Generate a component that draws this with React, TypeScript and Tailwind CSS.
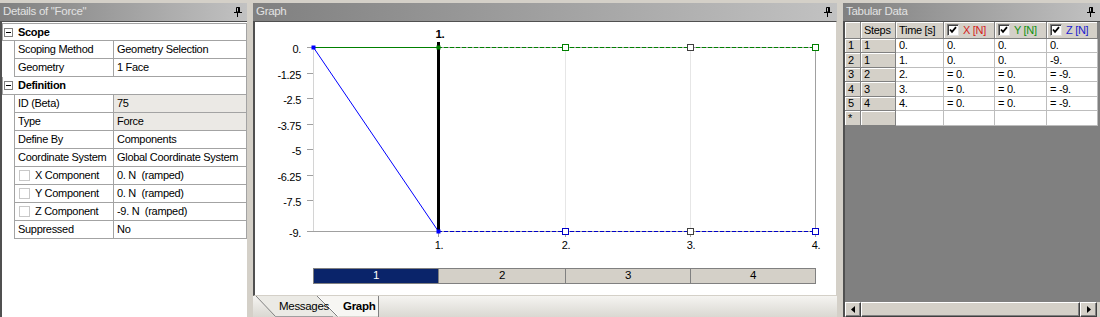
import React from "react";

function Pin() {
  return (
    <svg width="8" height="10" viewBox="0 0 8 10" className="shrink-0">
      <path d="M2.5 0.5h3v4.5h-3z" fill="none" stroke="#000" />
      <path d="M5 0.5v4.5" stroke="#000" strokeWidth="2" />
      <path d="M0 5.5h8" stroke="#000" />
      <path d="M3.5 5.5v4.5" stroke="#000" />
    </svg>
  );
}

function PanelHeader({ title }: { title: string }) {
  return (
    <div className="h-[18px] shrink-0 flex items-center justify-between pl-[3px] pr-[5px] bg-linear-to-r from-[#808080] to-[#c2c2c2] text-[11.5px] text-[#e2e2e2]">
      <span>{title}</span>
      <Pin />
    </div>
  );
}

type Row =
  | { kind: "cat"; label: string }
  | { kind: "prop"; name: string; value: string; gray?: boolean; check?: boolean };

const leftRows: Row[] = [
  { kind: "cat", label: "Scope" },
  { kind: "prop", name: "Scoping Method", value: "Geometry Selection" },
  { kind: "prop", name: "Geometry", value: "1 Face" },
  { kind: "cat", label: "Definition" },
  { kind: "prop", name: "ID (Beta)", value: "75", gray: true },
  { kind: "prop", name: "Type", value: "Force", gray: true },
  { kind: "prop", name: "Define By", value: "Components" },
  { kind: "prop", name: "Coordinate System", value: "Global Coordinate System" },
  { kind: "prop", name: "X Component", value: "0. N  (ramped)", check: true },
  { kind: "prop", name: "Y Component", value: "0. N  (ramped)", check: true },
  { kind: "prop", name: "Z Component", value: "-9. N  (ramped)", check: true },
  { kind: "prop", name: "Suppressed", value: "No" },
];

function DetailsPanel() {
  return (
    <div className="w-[247px] shrink-0 flex flex-col">
      <PanelHeader title={'Details of "Force"'} />
      <div className="flex-1 bg-white border-l-2 border-t border-[#505050] pt-px">
        <div className="w-[245px]">
          {leftRows.map((r, i) =>
            r.kind === "cat" ? (
              <div
                key={i}
                className={`h-[18px] flex items-center border-l border-r border-b border-[#a3a3a3] ${i === 0 ? "border-t" : ""}`}
              >
                <div className="w-[9px] h-[9px] ml-[1px] border border-[#808080] flex items-center justify-center">
                  <div className="w-[5px] h-px bg-black" />
                </div>
                <span className="ml-[5px] font-bold">{r.label}</span>
              </div>
            ) : (
              <div key={i} className="h-[18px] flex">
                <div className="w-[12px] shrink-0" />
                <div className="w-[99px] shrink-0 border-l border-b border-[#a3a3a3] flex items-center pl-[3px] whitespace-nowrap">
                  {r.check && (
                    <div className="w-[11px] h-[11px] border border-[#c8c8c8] mr-[5px] ml-px shrink-0" />
                  )}
                  <span>{r.name}</span>
                </div>
                <div
                  className={`flex-1 border-l border-b border-r border-[#a3a3a3] flex items-center pl-[3px] whitespace-pre ${r.gray ? "bg-[#ebe9e5]" : ""}`}
                >
                  {r.value}
                </div>
              </div>
            )
          )}
        </div>
      </div>
    </div>
  );
}

function Chart() {
  const X = [58, 183, 310, 435, 560];
  const yOf = (v: number) => Math.round(25 + (v * 184) / 9);
  const Y0 = 25;
  const Y9 = 209;
  const yVals = [0, 1.25, 2.5, 3.75, 5, 6.25, 7.5, 9];
  const yLabels = ["0.", "-1.25", "-2.5", "-3.75", "-5", "-6.25", "-7.5", "-9."];
  return (
    <svg width={581} height={246} className="block shrink-0">
      {/* axes & grid */}
      <line x1={X[0] + 0.5} y1={Y0} x2={X[0] + 0.5} y2={Y9} stroke="#d4d4d4" />
      <line x1={X[2] + 0.5} y1={Y0} x2={X[2] + 0.5} y2={Y9} stroke="#e6e6e6" />
      <line x1={X[3] + 0.5} y1={Y0} x2={X[3] + 0.5} y2={Y9} stroke="#e6e6e6" />
      <line x1={X[4] + 0.5} y1={Y0} x2={X[4] + 0.5} y2={Y9 + 6} stroke="#a0a0a0" />
      {yVals.map((v, i) => (
        <line key={"t" + i} x1={52} y1={yOf(v) + 0.5} x2={X[0]} y2={yOf(v) + 0.5} stroke="#a0a0a0" />
      ))}
      {[1, 2, 3].map((i) => (
        <line key={"b" + i} x1={X[i] + 0.5} y1={Y9} x2={X[i] + 0.5} y2={Y9 + 6} stroke="#a0a0a0" />
      ))}
      <line x1={52} y1={Y9 + 0.5} x2={X[4]} y2={Y9 + 0.5} stroke="#a0a0a0" />
      <line x1={52} y1={Y0 + 0.5} x2={X[4]} y2={Y0 + 0.5} stroke="#a0a0a0" />
      {/* series */}
      <line x1={X[0]} y1={Y0 + 0.5} x2={X[1]} y2={Y0 + 0.5} stroke="#008000" />
      <line x1={X[1]} y1={Y0 + 0.5} x2={X[4]} y2={Y0 + 0.5} stroke="#008000" strokeDasharray="4 2" />
      <line x1={X[1]} y1={Y9 + 0.5} x2={X[4]} y2={Y9 + 0.5} stroke="#0000c8" strokeDasharray="4 2" />
      <line x1={X[0] + 0.5} y1={Y0 + 0.5} x2={X[1] + 0.5} y2={Y9 + 0.5} stroke="#0000ff" />
      {/* current time bar */}
      <rect x={X[1] - 1} y={20} width={3} height={Y9 - 20} fill="#000" />
      <text x={X[1] + 2} y={12} textAnchor="middle" dominantBaseline="central" fontSize="11.5" fontWeight="bold" fill="#000">
        1.
      </text>
      {/* markers */}
      <rect x={X[0] - 1.5} y={Y0 - 1.5} width={4} height={4} fill="#0000ff" />
      <rect x={X[1] - 1.5} y={Y0 - 1.5} width={4} height={4} fill="#008000" />
      <rect x={X[1] - 1.5} y={Y9 - 1.5} width={4} height={4} fill="#0000ff" />
      {[
        [X[2], Y0, "#008000"],
        [X[3], Y0, "#404040"],
        [X[4], Y0, "#008000"],
        [X[2], Y9, "#0000c8"],
        [X[3], Y9, "#404040"],
        [X[4], Y9, "#0000c8"],
      ].map(([x, y, c], i) => (
        <rect
          key={"m" + i}
          x={(x as number) - 2.5}
          y={(y as number) - 2.5}
          width={6}
          height={6}
          fill="#fff"
          stroke={c as string}
        />
      ))}
      {/* labels */}
      {yVals.map((v, i) => (
        <text
          key={"yl" + i}
          x={46}
          y={yOf(v) + 1.5}
          textAnchor="end"
          dominantBaseline="central"
          fontSize="11"
          fill="#000"
          letterSpacing="-0.3"
        >
          {yLabels[i]}
        </text>
      ))}
      {["1.", "2.", "3.", "4."].map((l, i) => (
        <text
          key={"xl" + i}
          x={X[i + 1] + 1}
          y={223}
          textAnchor="middle"
          dominantBaseline="central"
          fontSize="11"
          fill="#000"
        >
          {l}
        </text>
      ))}
    </svg>
  );
}

function GraphPanel() {
  return (
    <div className="w-[584px] shrink-0 flex flex-col">
      <PanelHeader title="Graph" />
      <div className="flex-1 bg-white border-t border-l-2 border-[#505050] border-r border-r-[#d4d0c8] border-b border-b-[#d4d0c8] flex flex-col">
        <Chart />
        <div className="ml-[58px] w-[503px] h-[16px] flex border border-[#808080] text-[11.5px]">
          <div className="w-[125px] bg-[#0a246a] text-white border-r border-[#808080] flex items-center justify-center">1</div>
          <div className="w-[127px] bg-[#d4d0c8] border-r border-[#808080] flex items-center justify-center">2</div>
          <div className="w-[125px] bg-[#d4d0c8] border-r border-[#808080] flex items-center justify-center">3</div>
          <div className="flex-1 bg-[#d4d0c8] flex items-center justify-center">4</div>
        </div>
      </div>
      <div className="h-[21px] shrink-0 relative bg-linear-to-b from-[#f5f4f1] to-[#dad8d2] flex items-center text-[11.5px]">
        <svg width="584" height="21" className="absolute inset-0">
          <polygon points="3,0 22,20 82,20 82,0" fill="#ebeae5" />
          <line x1="3" y1="0" x2="22.5" y2="20.5" stroke="#808080" />
          <line x1="22" y1="20.5" x2="80" y2="20.5" stroke="#a0a0a0" />
          <polygon points="64,0 84,20 125,20 125,0" fill="#f7f6f3" />
          <line x1="64" y1="0" x2="84.5" y2="20.5" stroke="#808080" />
          <line x1="65" y1="0" x2="85.5" y2="20.5" stroke="#ffffff" />
          <line x1="125.5" y1="0" x2="125.5" y2="21" stroke="#808080" />
        </svg>
        <span className="relative ml-[26px]">Messages</span>
        <span className="relative ml-[14px] font-bold">Graph</span>
      </div>
    </div>
  );
}

const tabRows = [
  { n: "1", s: "1", t: "0.", x: "0.", y: "0.", z: "0." },
  { n: "2", s: "1", t: "1.", x: "0.", y: "0.", z: "-9." },
  { n: "3", s: "2", t: "2.", x: "= 0.", y: "= 0.", z: "= -9." },
  { n: "4", s: "3", t: "3.", x: "= 0.", y: "= 0.", z: "= -9." },
  { n: "5", s: "4", t: "4.", x: "= 0.", y: "= 0.", z: "= -9." },
  { n: "*", s: "", t: "", x: "", y: "", z: "" },
];
const rowH = ["h-[14px]", "h-[15px]", "h-[14px]", "h-[15px]", "h-[14px]", "h-[15px]"];

function Check() {
  return (
    <div className="w-[12px] h-[12px] bg-white border border-t-[#808080] border-l-[#808080] border-r-[#e0e0e0] border-b-[#e0e0e0] shadow-[inset_1px_1px_0_#404040] flex items-center justify-center shrink-0">
      <svg width="8" height="8" viewBox="0 0 8 8">
        <path d="M1 3.5 L3 5.8 L7 1.2" fill="none" stroke="#000" strokeWidth="1.8" />
      </svg>
    </div>
  );
}

function TabularPanel() {
  const hdr = "bg-[#d4d0c8] border-r border-b border-[#808080] shadow-[inset_1px_1px_0_#fff] flex items-center";
  const gray = "bg-[#d4d0c8] border-r border-b border-[#808080] shadow-[inset_1px_1px_0_#fff] flex items-center";
  const white = "bg-white border-r border-b border-[#bdbdbd] flex items-center pl-[3px] whitespace-nowrap";
  return (
    <div className="flex-1 flex flex-col">
      <PanelHeader title="Tabular Data" />
      <div className="flex-1 border-t border-l-2 border-[#505050] bg-[#808080] flex flex-col">
        <div className="w-[253px]">
          <div className="h-[17px] flex">
            <div className={`w-[16px] ${hdr}`} />
            <div className={`w-[35px] ${hdr} pl-[3px]`}>Steps</div>
            <div className={`w-[48px] ${hdr} pl-[3px]`}>Time [s]</div>
            <div className={`w-[51px] ${hdr} pl-[3px] gap-[4px]`}>
              <Check />
              <span className="text-[#d42020]">X [N]</span>
            </div>
            <div className={`w-[52px] ${hdr} pl-[3px] gap-[4px]`}>
              <Check />
              <span className="text-[#109010]">Y [N]</span>
            </div>
            <div className={`w-[51px] ${hdr} pl-[3px] gap-[4px]`}>
              <Check />
              <span className="text-[#2020d0]">Z [N]</span>
            </div>
          </div>
          {tabRows.map((r, i) => (
            <div key={i} className={`${rowH[i]} flex`}>
              <div className={`w-[16px] ${gray} pl-[3px]`}>{r.n}</div>
              <div className={`w-[35px] ${gray} pl-[3px]`}>{r.s}</div>
              <div className={`w-[48px] ${white}`}>{r.t}</div>
              <div className={`w-[51px] ${white}`}>{r.x}</div>
              <div className={`w-[52px] ${white}`}>{r.y}</div>
              <div className={`w-[51px] ${white}`}>{r.z}</div>
            </div>
          ))}
        </div>
        <div className="flex-1" />
        <div className="h-[15px] w-[255px] flex bg-[#d4d0c8]">
          <div className="w-[16px] h-full border border-t-white border-l-white border-r-[#404040] border-b-[#404040] shadow-[inset_-1px_-1px_0_#808080] flex items-center justify-center">
            <svg width="4" height="7" viewBox="0 0 4 7">
              <path d="M4 0 L0 3.5 L4 7 Z" fill="#000" />
            </svg>
          </div>
          <div className="flex-1 h-full border border-t-white border-l-white border-r-[#404040] border-b-[#404040] shadow-[inset_-1px_-1px_0_#808080]" />
          <div className="w-[17px] h-full border border-t-white border-l-white border-r-[#404040] border-b-[#404040] shadow-[inset_-1px_-1px_0_#808080] flex items-center justify-center">
            <svg width="4" height="7" viewBox="0 0 4 7">
              <path d="M0 0 L4 3.5 L0 7 Z" fill="#000" />
            </svg>
          </div>
          <div className="w-[3px]" />
        </div>
      </div>
    </div>
  );
}

export default function App() {
  return (
    <div className="w-[1100px] h-[317px] overflow-hidden bg-[#d4d0c8] pt-[3px] flex gap-[6px] text-[11px] tracking-[-0.3px] text-black font-['Liberation_Sans',Arial,sans-serif] leading-none">
      <DetailsPanel />
      <GraphPanel />
      <TabularPanel />
    </div>
  );
}
